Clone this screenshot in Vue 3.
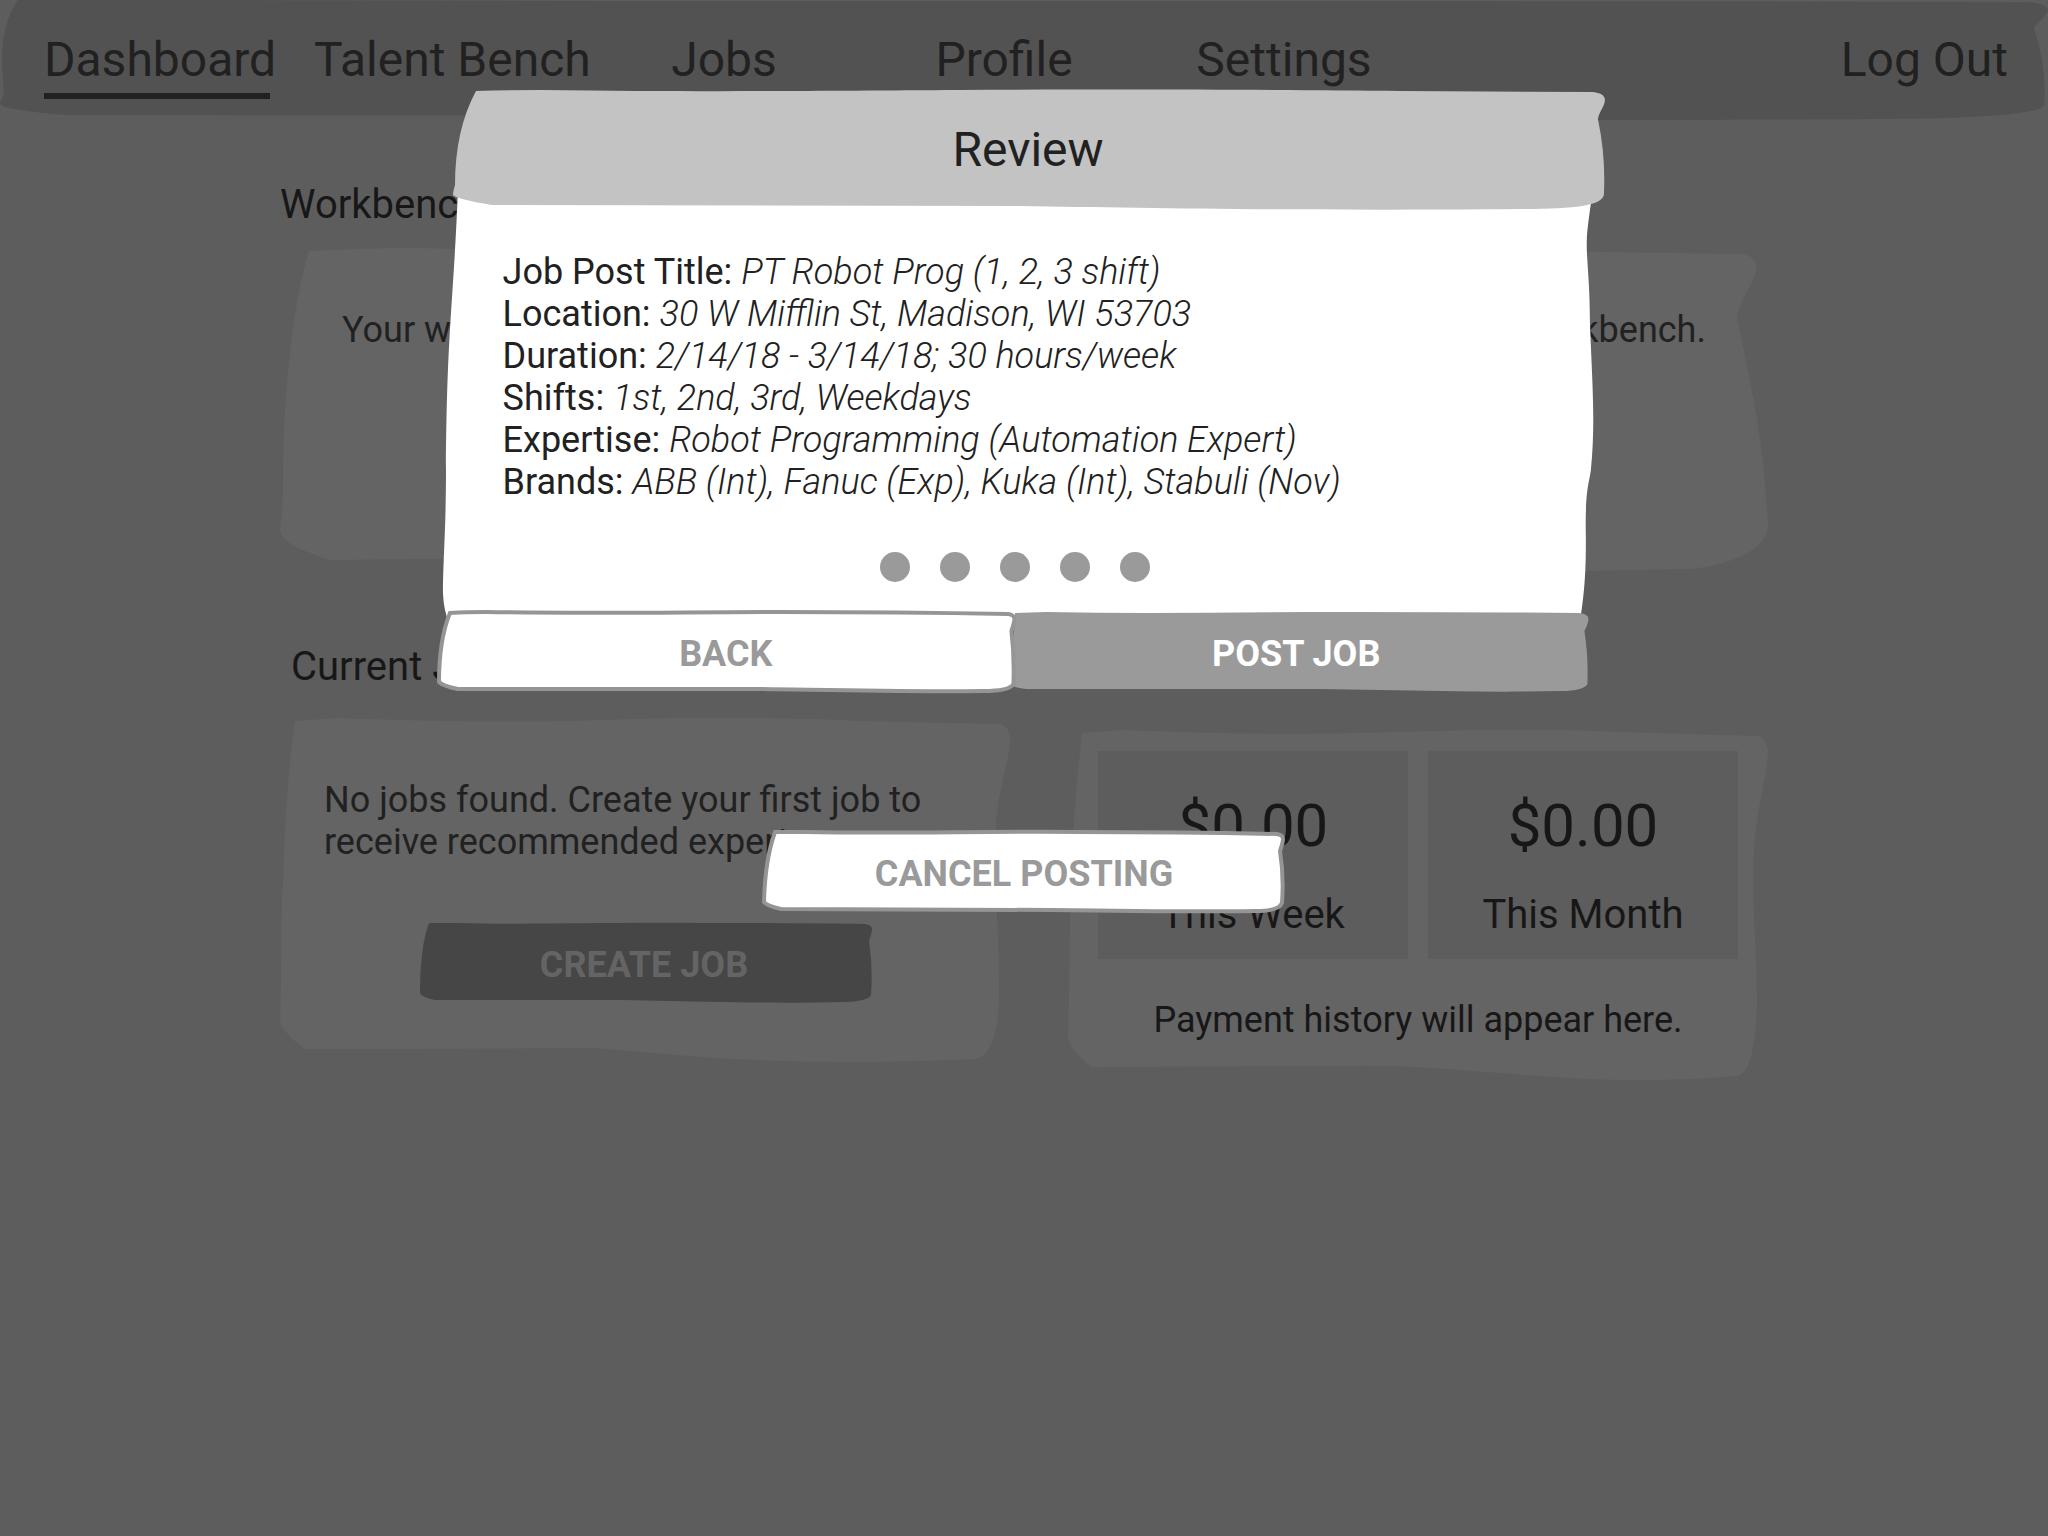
<script setup>
const navItems = [
  { label: 'Dashboard', active: true },
  { label: 'Talent Bench' },
  { label: 'Jobs', centered: true },
  { label: 'Profile', centered: true },
  { label: 'Settings', centered: true },
]

const details = [
  { term: 'Job Post Title:', value: 'PT Robot Prog (1, 2, 3 shift)' },
  { term: 'Location:', value: '30 W Mifflin St, Madison, WI 53703' },
  { term: 'Duration:', value: '2/14/18 - 3/14/18; 30 hours/week' },
  { term: 'Shifts:', value: '1st, 2nd, 3rd, Weekdays' },
  { term: 'Expertise:', value: 'Robot Programming (Automation Expert)' },
  { term: 'Brands:', value: 'ABB (Int), Fanuc (Exp), Kuka (Int), Stabuli (Nov)' },
]

const payments = [
  { amount: '$0.00', period: 'This Week' },
  { amount: '$0.00', period: 'This Month' },
]

// Hand-drawn outlines; each one stretches with the box it sits behind.
const shapes = {
  nav: {
    box: '0 0 2048 120',
    d: 'M18 0 Q1 24 2 66 L4 94 Q0 101 0 104 Q3 110 67 115 L960 116 C1200 117 1400 120 1600 120 C1800 119 1920 120 1970 117 Q2036 114 2044 106 Q2047 66 2034 29 C2034 24 2048 16 2048 9 Q2044 2 2020 2 L1440 1 L600 1 L200 0 Z',
  },
  workbench: {
    box: '280 249 1488 324',
    d: 'M309 251 Q350 249 395 248 C520 249 640 254 800 252 C1000 249 1200 247 1400 249 L1740 254 C1757 255 1758 267 1755 275 C1751 286 1737 307 1737 318 C1750 380 1764 444 1766 500 Q1768 515 1768 528 C1764 552 1726 566 1690 569 Q1600 571 1500 572 C1300 570 1000 558 800 559 L420 559 L329 560 C305 551 281 544 280 530 Q283 510 283 480 C283 400 292 306 309 251 Z',
  },
  jobs: {
    box: '280 719 728 344',
    d: 'M295 721 L337 718 C420 721 520 723 600 720 C700 717 780 717 860 721 L1000 724 Q1010 726 1010 742 C1008 764 999 790 996 820 C993 880 1000 940 999 1000 Q997 1054 976 1059 C860 1064 780 1062 700 1057 Q620 1050 590 1048 L420 1049 L305 1049 Q281 1032 280 1020 C282 970 280 930 283 880 C285 820 288 770 295 721 Z',
  },
  payments: {
    box: '1068 731 700 350',
    d: 'M1082 733 L1123 730 C1200 733 1280 735 1360 733 C1460 730 1540 728 1620 732 L1758 736 Q1767 738 1768 752 C1768 768 1759 800 1755 836 C1750 900 1758 960 1757 1010 Q1754 1072 1738 1076 C1650 1083 1580 1080 1500 1073 Q1400 1064 1340 1066 L1091 1067 Q1071 1050 1068 1039 C1070 980 1069 940 1071 880 C1073 820 1077 780 1082 733 Z',
  },
  create: {
    box: '420 922 448 84',
    d: 'M429 922 Q440 922 455 922 C540 924 600 921 700 922 Q800 922 865 923 Q872 924 872 928 Q872 932 869 940 Q873 966 871 994 Q869 1000 845 1001 C760 1003 690 1000 620 999 L435 999 Q421 996 420 992 Q420 946 429 922 Z',
  },
  header: {
    box: '454 90 1148 118',
    d: 'M475 91 Q505 90 540 90 C700 92 800 91 960 90 C1150 89 1300 90 1400 91 L1592 92 Q1605 93 1605 100 C1605 106 1600 110 1598 119 Q1606 156 1604 195 C1601 206 1575 209 1520 209 C1300 211 1150 208 1020 206 L491 205 Q455 199 452 195 Q452 192 454 185 Q454 130 475 91 Z',
  },
  body: {
    box: '440 208 1148 404',
    d: 'M457 190 C452 310 446 330 445 470 C445 530 442 560 442 594 Q443 612 448 622 L1580 622 C1585 590 1586 570 1586 540 C1585 490 1589 485 1591 470 C1596 420 1592 380 1590 320 C1590 280 1586 255 1587 238 Q1587 230 1593 190 Z',
  },
  back: {
    box: '440 612 573 84',
    d: 'M449 613 Q465 612 485 612 C600 614 680 612 780 612 Q900 612 1010 614 Q1016 615 1016 619 Q1016 622 1013 631 Q1016 656 1015 684 Q1011 691 985 691 C900 692 830 690 760 689 L457 689 Q442 686 438 682 Q438 640 449 613 Z',
  },
  post: {
    box: '1015 612 571 84',
    d: 'M1019 613 L1050 612 C1150 614 1250 612 1350 612 Q1480 612 1578 613 Q1587 614 1587 619 Q1587 623 1583 631 Q1587 656 1586 684 Q1582 691 1560 691 C1480 693 1400 690 1320 689 L1030 689 Q1020 688 1015 685 Z',
  },
  cancel: {
    box: '764 832 520 84',
    d: 'M775 832 Q790 832 805 832 C900 834 980 831 1080 832 Q1180 832 1277 834 Q1283 835 1283 839 Q1283 842 1280 851 Q1284 876 1282 903 Q1279 911 1255 911 C1190 912 1120 911 1050 910 L781 909 Q767 906 764 902 Q765 860 775 832 Z',
  },
}
</script>

<template>
  <div class="page">
    <nav class="nav" aria-label="Main">
      <svg class="sketch" :viewBox="shapes.nav.box" preserveAspectRatio="none" aria-hidden="true"><path :d="shapes.nav.d" /></svg>
      <ul class="nav-list">
        <li v-for="item in navItems" :key="item.label" :class="{ centered: item.centered }">
          <a href="#" :class="{ active: item.active }">{{ item.label }}</a>
        </li>
      </ul>
      <a href="#" class="logout">Log Out</a>
    </nav>

    <main class="main">
      <h2 class="heading">Workbench</h2>
      <section class="card workbench">
        <svg class="sketch" :viewBox="shapes.workbench.box" preserveAspectRatio="none" aria-hidden="true"><path :d="shapes.workbench.d" /></svg>
        <p>Your workbench is empty. Add experts from the talent bench to build your workbench.</p>
      </section>

      <div class="columns">
        <div>
          <h2 class="heading indented">Current Jobs</h2>
          <section class="card jobs">
            <svg class="sketch" :viewBox="shapes.jobs.box" preserveAspectRatio="none" aria-hidden="true"><path :d="shapes.jobs.d" /></svg>
            <p>No jobs found. Create your first job to receive recommended experts.</p>
            <button type="button" class="btn create">
              <svg class="sketch" :viewBox="shapes.create.box" preserveAspectRatio="none" aria-hidden="true"><path :d="shapes.create.d" /></svg>
              <span>CREATE JOB</span>
            </button>
          </section>
        </div>

        <section class="card payments">
          <svg class="sketch" :viewBox="shapes.payments.box" preserveAspectRatio="none" aria-hidden="true"><path :d="shapes.payments.d" /></svg>
          <div class="totals">
            <div v-for="p in payments" :key="p.period" class="total">
              <strong>{{ p.amount }}</strong>
              <span>{{ p.period }}</span>
            </div>
          </div>
          <p>Payment history will appear here.</p>
        </section>
      </div>
    </main>

    <div class="overlay">
      <div class="modal" role="dialog" aria-labelledby="review-title">
        <header class="modal-header">
          <svg class="sketch" :viewBox="shapes.header.box" preserveAspectRatio="none" aria-hidden="true"><path :d="shapes.header.d" /></svg>
          <h1 id="review-title">Review</h1>
        </header>
        <div class="modal-body">
          <svg class="sketch" :viewBox="shapes.body.box" preserveAspectRatio="none" aria-hidden="true"><path :d="shapes.body.d" /></svg>
          <dl class="details">
            <div v-for="d in details" :key="d.term">
              <dt>{{ d.term }}</dt>&#32;<dd>{{ d.value }}</dd>
            </div>
          </dl>
          <div class="dots" aria-hidden="true">
            <i v-for="n in 5" :key="n"></i>
          </div>
        </div>
        <div class="actions">
          <button type="button" class="btn outline back">
            <svg class="sketch" :viewBox="shapes.back.box" preserveAspectRatio="none" aria-hidden="true"><path :d="shapes.back.d" /></svg>
            <span>BACK</span>
          </button>
          <button type="button" class="btn post">
            <svg class="sketch" :viewBox="shapes.post.box" preserveAspectRatio="none" aria-hidden="true"><path :d="shapes.post.d" /></svg>
            <span>POST JOB</span>
          </button>
        </div>
      </div>
      <button type="button" class="btn outline cancel">
        <svg class="sketch" :viewBox="shapes.cancel.box" preserveAspectRatio="none" aria-hidden="true"><path :d="shapes.cancel.d" /></svg>
        <span>CANCEL POSTING</span>
      </button>
    </div>
  </div>
</template>

<style>
body {
  background: #5d5d5d;
}
</style>

<style scoped>
.page {
  position: relative;
  min-height: 100vh;
  background: #5d5d5d;
  color: #212121;
  font: 400 36px/42px Roboto, "Liberation Sans", sans-serif;
}

h1, h2, p, ul, dl, dd {
  margin: 0;
  padding: 0;
  font-weight: 400;
}

/* Hand-drawn background layer */
.sketch {
  position: absolute;
  inset: 0;
  z-index: 0;
  width: 100%;
  height: 100%;
  overflow: visible;
  pointer-events: none;
}

.nav {
  position: relative;
  display: flex;
  justify-content: space-between;
  box-sizing: border-box;
  height: 120px;
  padding: 32px 40px 0 44px;
  font-size: 48px;
  line-height: 56px;
}
.nav .sketch { fill: #525252; }
.nav a {
  position: relative;
  color: inherit;
  text-decoration: none;
  white-space: nowrap;
}
.nav-list {
  display: flex;
  list-style: none;
}
.nav-list li { width: 270px; }
.nav-list li.centered {
  width: 280px;
  text-align: center;
}
.nav a.active::after {
  content: "";
  position: absolute;
  left: 0;
  top: 62px;
  width: 226px;
  height: 6px;
  background: #212121;
}

.main { padding: 61px 280px 0; }
.heading {
  margin-bottom: 20px;
  color: #171717;
  font-size: 40px;
  line-height: 48px;
}
.heading.indented {
  margin: 0 0 28px 11px;
}

.card { position: relative; }
.card > .sketch { fill: #646464; }
.card p { position: relative; }

.workbench {
  box-sizing: border-box;
  min-height: 324px;
  padding: 60px 40px;
  text-align: center;
}
.workbench p { white-space: nowrap; }

.columns {
  display: grid;
  grid-template-columns: 728fr 700fr;
  align-items: start;
  gap: 60px;
  margin-top: 70px;
}
.jobs {
  display: flex;
  flex-direction: column;
  gap: 60px;
  padding: 60px 80px 56px 44px;
}
.jobs .create { margin-left: 96px; }

.payments {
  margin-top: 88px;
  padding: 20px 30px 40px;
  color: #171717;
  text-align: center;
}
.totals {
  position: relative;
  display: flex;
  gap: 20px;
  margin-bottom: 40px;
}
.total {
  flex: 1;
  display: flex;
  flex-direction: column;
  gap: 30px;
  padding: 40px 0 20px;
  background: #5d5d5d;
  font-size: 40px;
  line-height: 48px;
}
.total strong {
  font-size: 60px;
  font-weight: 400;
  line-height: 70px;
}

.btn {
  position: relative;
  height: 84px;
  padding: 0;
  border: 0;
  background: none;
  color: #9a9a9a;
  font: 700 36px/42px Roboto, "Liberation Sans", sans-serif;
  cursor: pointer;
}
.btn span { position: relative; }
.btn.outline .sketch {
  fill: #fff;
  stroke: #959595;
  stroke-width: 4;
}
.create {
  width: 448px;
  color: #646464;
}
.create .sketch { fill: #464646; }

.overlay {
  position: absolute;
  inset: 0;
  display: flex;
  flex-direction: column;
  align-items: center;
  padding-top: 90px;
}
.modal {
  display: flex;
  flex-direction: column;
  width: 56%;
  margin-right: 20px;
}
.modal-header {
  position: relative;
  z-index: 1;
  box-sizing: border-box;
  height: 118px;
  margin: 0 -14px 0 14px;
  padding-top: 32px;
  text-align: center;
}
.modal-header .sketch { fill: #c3c3c3; }
.modal-header h1 {
  position: relative;
  font-size: 48px;
  line-height: 56px;
}
.modal-body {
  position: relative;
  padding: 43px 60px 30px 62px;
}
.modal-body .sketch { fill: #fff; }
.details { position: relative; }
.details dt,
.details dd { display: inline; }
.details dd {
  font-weight: 300;
  font-style: italic;
}
.dots {
  position: relative;
  display: flex;
  justify-content: center;
  gap: 30px;
  margin-top: 49px;
}
.dots i {
  width: 30px;
  height: 30px;
  border-radius: 50%;
  background: #9a9a9a;
}
.actions { display: flex; }
.actions .btn { flex: 1; }
.back { z-index: 1; }
.actions .post {
  padding-right: 6px;
  color: #fff;
}
.post .sketch { fill: #9a9a9a; }
.cancel {
  width: 520px;
  margin-top: 136px;
}
</style>
